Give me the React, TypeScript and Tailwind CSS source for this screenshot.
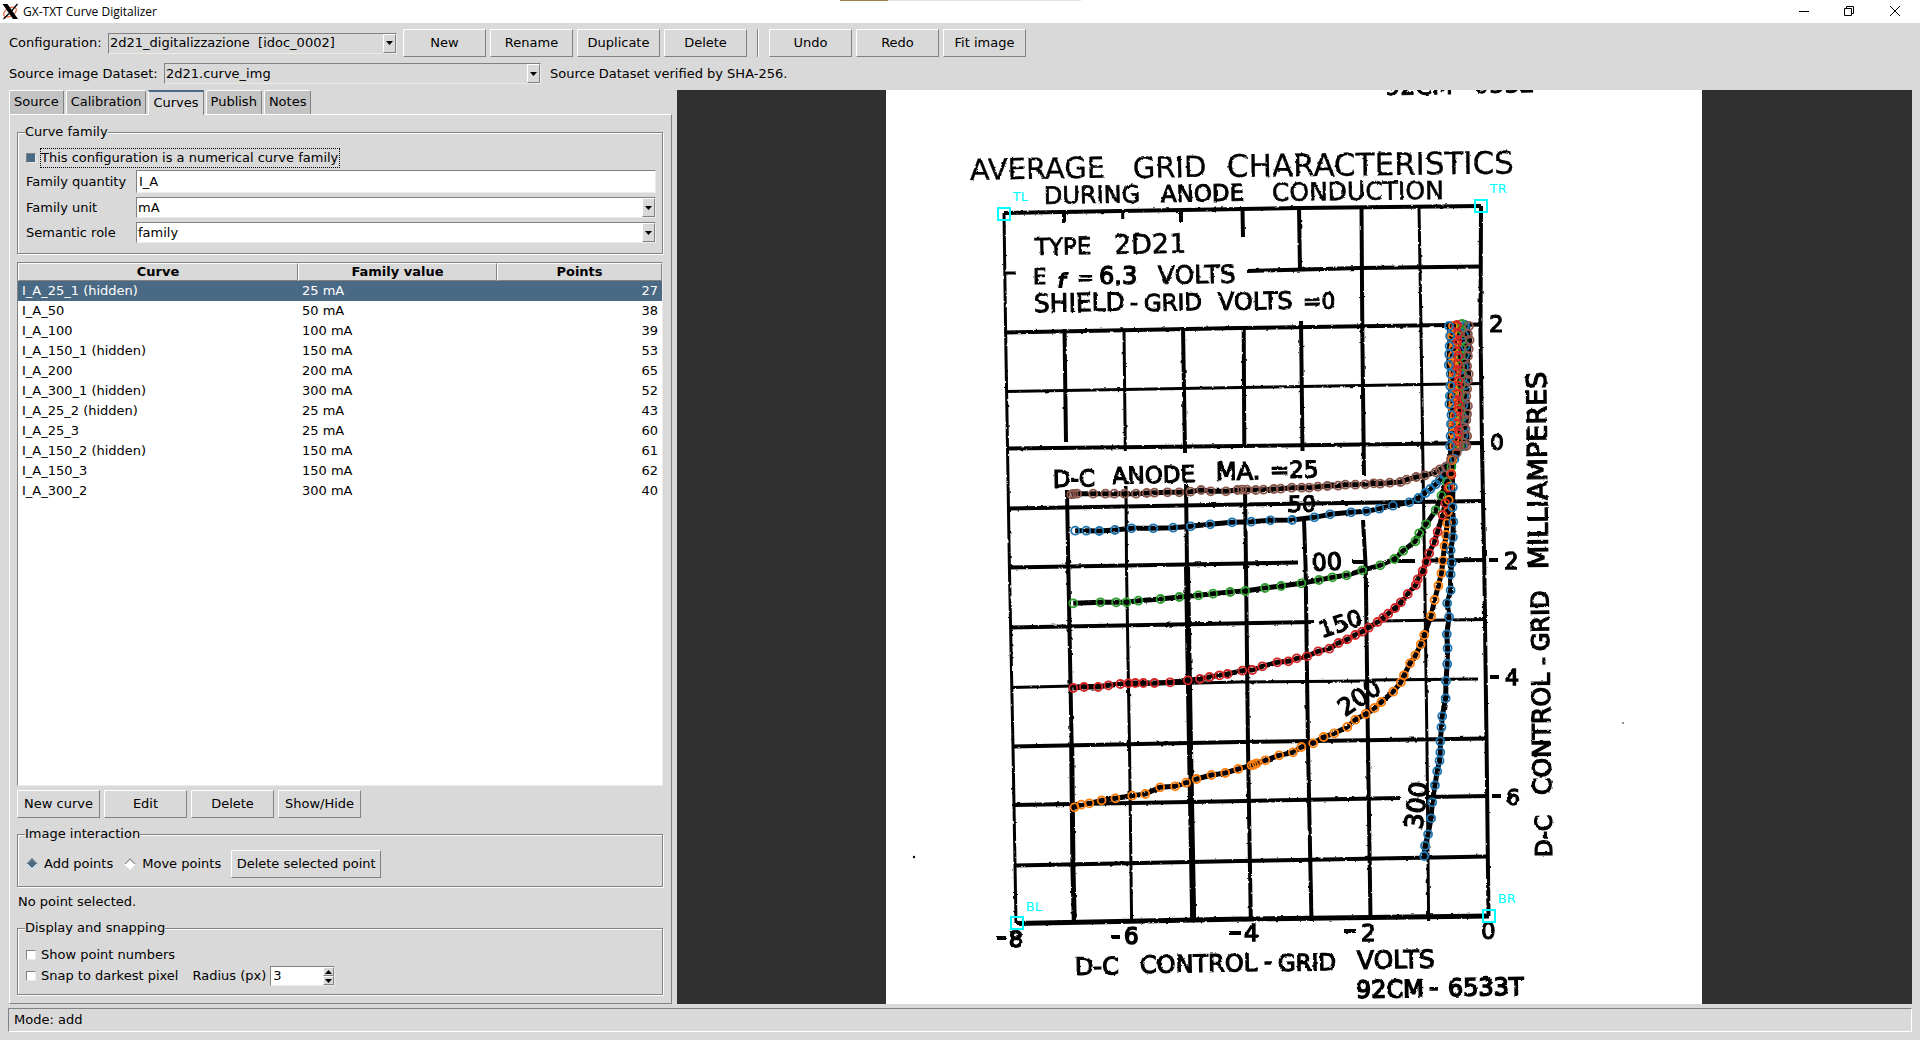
import React, { useState } from "react";

const CURVES = [
  ["I_A_25_1 (hidden)", "25 mA", 27],
  ["I_A_50", "50 mA", 38],
  ["I_A_100", "100 mA", 39],
  ["I_A_150_1 (hidden)", "150 mA", 53],
  ["I_A_200", "200 mA", 65],
  ["I_A_300_1 (hidden)", "300 mA", 52],
  ["I_A_25_2 (hidden)", "25 mA", 43],
  ["I_A_25_3", "25 mA", 60],
  ["I_A_150_2 (hidden)", "150 mA", 61],
  ["I_A_150_3", "150 mA", 62],
  ["I_A_300_2", "300 mA", 40],
] as const;

type Point = [number, number];

/* Digitized points, in scan units; toCanvas maps them onto the drawing. */
const toCanvas = (list: Point[]): Point[] => list.map(([x, y]) => [960 + x / 2.613, 340 + y / 3]);

const brownTail: Point[] = [
  [291, 463], [297, 462], [306, 461], [348, 461], [380, 461], [403, 461], [430, 461], [460, 461], [488, 459], [508, 458],
  [542, 457], [573, 457], [602, 455], [630, 450], [655, 454], [695, 454], [725, 450], [737, 449], [750, 449], [773, 450],
  [793, 449], [820, 447], [838, 446], [867, 443], [893, 443], [912, 443], [935, 440], [960, 438], [988, 437], [1007, 434],
  [1033, 434], [1059, 433], [1081, 430], [1098, 431], [1123, 428], [1151, 426], [1167, 419], [1192, 411], [1215, 406],
  [1243, 397], [1254, 388], [1270, 380], [1283, 358], [1298, 338], [1317, 317],
];
const blue50Tail: Point[] = [
  [301, 572], [330, 572], [364, 573], [405, 570], [448, 565], [505, 565], [557, 563], [603, 559], [654, 553], [711, 547],
  [761, 545], [811, 541], [868, 540], [926, 532], [967, 523], [1022, 517], [1062, 514], [1096, 506], [1131, 497],
  [1174, 487], [1198, 474], [1216, 459], [1229, 447], [1243, 433], [1254, 420], [1265, 405], [1270, 380], [1292, 357],
];
const greenTail: Point[] = [
  [296, 790], [367, 787], [408, 787], [435, 787], [466, 782], [524, 777], [573, 771], [623, 766], [661, 761], [706, 756],
  [745, 753], [797, 744], [839, 738], [892, 730], [938, 720], [973, 712], [1010, 706], [1051, 691], [1098, 676],
  [1135, 657], [1158, 632], [1190, 604], [1200, 580], [1218, 553], [1243, 511], [1258, 467], [1272, 425], [1284, 380],
];
const redTail: Point[] = [
  [296, 1044], [324, 1041], [361, 1041], [388, 1036], [419, 1032], [440, 1030], [458, 1029], [479, 1029], [508, 1029],
  [549, 1027], [595, 1021], [627, 1017], [652, 1011], [678, 1006], [699, 1002], [738, 992], [764, 990], [790, 979],
  [829, 967], [858, 964], [880, 955], [907, 949], [936, 934], [965, 926], [989, 909], [1012, 898], [1033, 885],
  [1051, 875], [1068, 863], [1091, 846], [1106, 833], [1119, 821], [1137, 804], [1152, 787], [1170, 762], [1191, 735],
  [1196, 718], [1209, 693], [1219, 666], [1226, 640], [1239, 606], [1248, 575], [1261, 525], [1268, 490], [1276, 443],
  [1284, 404],
];
const orangeTail: Point[] = [
  [299, 1402], [317, 1394], [338, 1390], [370, 1381], [406, 1375], [450, 1367], [484, 1362], [523, 1342], [562, 1339],
  [591, 1328], [618, 1317], [657, 1305], [693, 1299], [727, 1287], [762, 1276], [768, 1274], [775, 1270], [798, 1261],
  [834, 1246], [870, 1237], [892, 1221], [923, 1210], [950, 1191], [978, 1180], [1012, 1161], [1033, 1139], [1060, 1122],
  [1083, 1104], [1101, 1086], [1132, 1055], [1152, 1027], [1160, 1006], [1176, 970], [1190, 946], [1204, 913],
  [1213, 885], [1231, 828], [1240, 780], [1250, 737], [1258, 700], [1262, 662], [1266, 618], [1270, 585], [1273, 550],
  [1275, 515], [1277, 480], [1280, 440], [1283, 400], [1286, 360],
];
const blue300Tail: Point[] = [
  [1213, 1548], [1215, 1517], [1223, 1483], [1231, 1435], [1234, 1387], [1241, 1336], [1247, 1294], [1253, 1262],
  [1255, 1237], [1255, 1204], [1258, 1162], [1260, 1129], [1269, 1075], [1270, 1023], [1273, 972], [1274, 925],
  [1272, 883], [1278, 831], [1273, 790], [1282, 751], [1282, 703], [1285, 668], [1282, 631], [1288, 592], [1289, 545],
  [1287, 502], [1288, 442],
];

/* The steep upper part of a curve: evenly stepped points with a little hand jitter. */
function riser(bottomX: number, topX: number, topY: number, step: number, phase: number): Point[] {
  const out: Point[] = [];
  const bottomY = 446;
  let i = 0;
  for (let y = bottomY; y > topY; y -= step + ((i * 7 + phase) % 5) - 2) {
    const t = (bottomY - y) / (bottomY - topY);
    const wobble = (((i * 5 + phase) % 4) - 1.5) * 0.6;
    out.push([bottomX + (topX - bottomX) * t + wobble, y]);
    i += 1;
  }
  out.push([topX, topY]);
  return out;
}

const SERIES: { color: string; points: Point[] }[] = [
  { color: "#1f77b4", points: [...toCanvas(blue50Tail), ...riser(1463, 1465, 325, 10, 1)] },
  { color: "#2ca02c", points: [...toCanvas(greenTail), ...riser(1459, 1462, 324, 9, 3)] },
  { color: "#ff7f0e", points: [...toCanvas(orangeTail), ...riser(1454, 1453, 326, 6, 2)] },
  { color: "#d62728", points: [...toCanvas(redTail), ...riser(1458, 1457, 325, 6, 4)] },
  { color: "#1f77b4", points: [...toCanvas(blue300Tail), ...riser(1451, 1449, 326, 10, 0)] },
  { color: "#8c564b", points: [...toCanvas(brownTail), ...riser(1466, 1469, 326, 8, 2)] },
];

/* Grid of the scanned sheet, slightly skewed as on paper: [path, stroke width]. */
const GRID: [string, number][] = [
  ["M1004 213 L1120 211 L1300 208 L1481 206", 4],
  ["M1005 273 h11", 3],
  ["M1247 271 L1360 268 L1481 266.5", 4],
  ["M1005 332.5 L1240 328 L1481 324.5", 4],
  ["M1006 391.5 L1240 387.5 L1482 383.5", 3],
  ["M1007 448.5 L1240 446 L1482 443", 4],
  ["M1008 508.5 L1240 504.5 L1483 501", 4],
  ["M1009 567.5 L1298 562.5", 4],
  ["M1352 562 H1367 M1392 561 H1415 M1430 560.5 L1484 560", 4],
  ["M1010 627.5 L1314 622", 4],
  ["M1377 621 L1485 619.5", 3],
  ["M1011 687.5 L1240 682 L1366 681 M1372 680 L1478 679", 3],
  ["M1013 746.5 L1240 742 L1487 738.5", 4],
  ["M1014 805 L1190 802 L1400 798", 4],
  ["M1427 797 L1488 796", 4],
  ["M1015 865.5 L1240 861 L1488 856.5", 4],
  ["M1016 923.5 L1250 919 L1489 916", 5],
  ["M1004 213 L1005.6 330 L1007.5 447 L1009.4 567 L1013 747 L1016 923", 3],
  ["M1064 212 V223 M1064.5 329 L1066 442 M1067 490 L1068.3 567 L1071.7 747", 4],
  ["M1071.7 747 L1073 870 L1074.3 922", 5],
  ["M1122.7 212 V219 M1124 329 L1125.3 451 M1126 486 L1126.5 567 L1129.5 747 L1131.6 921", 3],
  ["M1181 209 V222 M1183 327 L1185 453 M1186 484 L1187 567", 4],
  ["M1187 567 L1190 747 L1193 908 V921", 6],
  ["M1242.5 209 L1243 237 M1243.7 327 L1244.3 447 M1245 488 L1246 567 L1248 747 L1250.8 919", 4],
  ["M1299 207 L1300 271 M1301 321 L1302.5 451 M1304 520 L1305.6 567 L1308 747 L1311.5 922", 4],
  ["M1361.5 207 L1362.3 330 L1364 476 M1363 520 L1365.7 567 L1368 747 L1370.5 919", 4],
  ["M1419 207 L1421 330 L1422.7 447 L1424.6 567 L1427 747 L1428.6 921", 3],
  ["M1481 206 L1480.5 330 L1482 447 L1484.3 567 L1486.6 747 L1488.5 916", 4],
  ["M1489 560 h9 M1490 677 h9 M1492 796 h9", 4],
  ["M996 938 h10 M1111 937 h9 M1229 933 h12 M1344 931 h12", 4],
];

/* Lettering: text, x, baseline, font size, rotation, stroke weight. */
const LETTERING: [string, number, number, number, number, number][] = [
  ["92CM", 1385, 95, 24, -1, 1],
  ["6532", 1474, 93, 24, -1, 1],
  ["AVERAGE", 970, 180, 29, -1, 0.3],
  ["GRID", 1133, 178, 29, -1, 0.3],
  ["CHARACTERISTICS", 1227, 177, 31, -0.7, 0.3],
  ["DURING", 1044, 204, 24, -1, 0.7],
  ["ANODE", 1161, 202, 23, -1, 1],
  ["CONDUCTION", 1272, 201, 25, -0.7, 0.6],
  ["TYPE", 1035, 255, 23, -1, 0.8],
  ["2D21", 1114, 254, 27, -1, 0.6],
  ["E", 1033, 284, 21, 0, 1],
  ["=", 1077, 284, 20, 0, 1],
  ["6.3", 1099, 284, 24, 0, 1.4],
  ["VOLTS", 1158, 284, 25, -1, 0.8],
  ["SHIELD", 1034, 312, 25, -1, 1],
  ["-", 1130, 310, 22, 0, 1.2],
  ["GRID", 1144, 311, 23, -1, 1],
  ["VOLTS", 1218, 310, 24, -1, 1],
  ["=0", 1303, 309, 22, -1, 1],
  ["D-C", 1053, 487, 23, -1, 1.3],
  ["ANODE", 1112, 484, 23, -1.5, 1.2],
  ["MA.", 1216, 480, 24, -1, 1.3],
  ["=25", 1270, 478, 23, -1, 1.3],
  ["50", 1288, 512, 22, -1, 1.3],
  ["00", 1312, 571, 24, -3, 1.3],
  ["150", 1322, 638, 23, -18, 1.3],
  ["200", 1345, 717, 24, -34, 1.3],
  ["300", 1422, 830, 25, -83, 1.4],
  ["2", 1489, 332, 23, 0, 1.2],
  ["0", 1490, 450, 22, 0, 1.2],
  ["2", 1504, 569, 23, 0, 1.4],
  ["4", 1505, 685, 22, 0, 1.4],
  ["6", 1506, 805, 22, 0, 1.4],
  ["8", 1009, 947, 22, 0, 1.8],
  ["6", 1124, 944, 23, 0, 1.6],
  ["4", 1244, 941, 23, 0, 1.4],
  ["2", 1361, 941, 23, 0, 1.4],
  ["0", 1481, 939, 23, 0, 1.2],
  ["D-C", 1075, 975, 24, -1, 1.2],
  ["CONTROL", 1140, 973, 24, -1, 1.2],
  ["-", 1264, 970, 24, 0, 1.4],
  ["GRID", 1278, 971, 23, -1, 1.2],
  ["VOLTS", 1357, 969, 25, -1, 1.2],
  ["92CM", 1356, 998, 24, -1, 1.5],
  ["-", 1429, 996, 26, 0, 1.6],
  ["6533T", 1448, 996, 24, -1, 1.5],
  ["D-C", 1552, 857, 23, -90.6, 1.3],
  ["CONTROL", 1551, 795, 25, -90.6, 1.3],
  ["-", 1550, 665, 22, -90.6, 1.3],
  ["GRID", 1549, 651, 24, -90.6, 1.3],
  ["MILLIAMPERES", 1548, 569, 27, -90.6, 1.2],
];

const CORNERS: [string, number, number, number, number][] = [
  ["TL", 1004, 214, 1013, 201],
  ["TR", 1481, 206, 1490, 193],
  ["BL", 1017, 923, 1026, 911],
  ["BR", 1489, 916, 1498, 903],
];

function CurveCanvas() {
  return (
    <svg
      role="img"
      aria-label="Scanned grid characteristics with digitized curves"
      viewBox="677 90 1235 914"
      preserveAspectRatio="xMidYMid slice"
      className="block h-full w-full bg-[#303030]"
    >
      <defs>
        <filter id="ink" x="-5%" y="-5%" width="110%" height="110%">
          <feTurbulence type="fractalNoise" baseFrequency="0.2" numOctaves="2" seed="4" result="n" />
          <feDisplacementMap in="SourceGraphic" in2="n" scale="2.4" xChannelSelector="R" yChannelSelector="G" />
        </filter>
      </defs>
      <rect x="886" y="80" width="816" height="940" fill="#fff" />
      <g filter="url(#ink)">
        <g fill="none" stroke="#000">
          {GRID.map(([d, w]) => (
            <path key={d} d={d} strokeWidth={w} />
          ))}
          {SERIES.map((s, i) => (
            <polyline key={i} points={s.points.map((p) => p.join(",")).join(" ")} strokeWidth="5" strokeLinejoin="round" />
          ))}
        </g>
        <g fontFamily="'DejaVu Sans', sans-serif" fill="#000" stroke="#000">
          {LETTERING.map(([t, x, y, size, turn, w], i) => (
            <text key={i} x={x} y={y} fontSize={size} strokeWidth={w} transform={`rotate(${turn} ${x} ${y})`}>
              {t}
            </text>
          ))}
          <text x="1057" y="288" fontSize="22" fontStyle="italic" fontWeight="bold" strokeWidth="0">
            f
          </text>
        </g>
        <circle cx="914" cy="857" r="1.2" />
        <circle cx="1623" cy="723" r="0.8" />
      </g>
      {SERIES.map((s, i) => (
        <g key={i} fill="none" stroke={s.color} strokeWidth="1.8">
          {s.points.map(([x, y], j) => (
            <circle key={j} cx={x} cy={y} r="4" />
          ))}
        </g>
      ))}
      <g fontFamily="'DejaVu Sans', sans-serif" fontSize="13">
        {CORNERS.map(([name, cx, cy, tx, ty]) => (
          <g key={name}>
            <rect x={cx - 6} y={cy - 6} width="12" height="12" fill="none" stroke="#0ff" strokeWidth="2" />
            <text x={tx} y={ty} fill="#0ff">
              {name}
            </text>
          </g>
        ))}
      </g>
    </svg>
  );
}

const RAISED = "border border-t-white border-l-white border-b-[#828282] border-r-[#828282]";
const SUNKEN = "border border-t-[#828282] border-l-[#828282] border-b-[#eeebe7] border-r-[#eeebe7]";

function Button({ children, className = "w-[83px]" }: { children: React.ReactNode; className?: string }) {
  return (
    <button className={`${RAISED} ${className} h-7 shrink-0 pb-px text-center whitespace-nowrap`}>{children}</button>
  );
}

function Triangle({ up = false }: { up?: boolean }) {
  return (
    <svg width="7" height="4" viewBox="0 0 7 4" className={up ? "rotate-180" : ""}>
      <path d="M0 0h7L3.5 4z" fill="#000" />
    </svg>
  );
}

function Combo({ id, value, className = "" }: { id: string; value: string; className?: string }) {
  return (
    <div className={`${SUNKEN} ${className} relative h-[21px]`}>
      <select id={id} className="block h-full w-full appearance-none bg-transparent pl-px leading-4 whitespace-pre outline-none">
        <option>{value}</option>
      </select>
      <span className={`${RAISED} pointer-events-none absolute inset-y-0 right-0 flex w-[13px] items-center justify-center bg-[#d9d9d9]`}>
        <Triangle />
      </span>
    </div>
  );
}

function Group({ title, className, children }: { title: string; className: string; children: React.ReactNode }) {
  return (
    <fieldset className={`${className} min-w-0 border border-[#828282] pr-[6px] pl-2 shadow-[1px_1px_0_#fff,inset_1px_1px_0_#fff]`}>
      <legend className="-ml-px bg-[#d9d9d9] leading-4">{title}</legend>
      {children}
    </fieldset>
  );
}

const TICK =
  "h-[10px] w-[10px] shrink-0 appearance-none border border-t-[#828282] border-l-[#828282] border-b-[#eeebe7] border-r-[#eeebe7] bg-white checked:bg-[#4a6984]";

function Radio({ label, checked, onPick }: { label: string; checked: boolean; onPick: () => void }) {
  return (
    <label className="flex items-center gap-2">
      <input
        type="radio"
        name="mode"
        checked={checked}
        onChange={onPick}
        className="ml-[2px] h-2 w-2 rotate-45 appearance-none border border-t-[#828282] border-r-white border-b-white border-l-[#828282] bg-white checked:bg-[#4a6984]"
      />
      {label}
    </label>
  );
}

const TABS = ["Source", "Calibration", "Curves", "Publish", "Notes"];

export default function App() {
  const [mode, setMode] = useState("add");
  return (
    <div className="flex h-screen flex-col bg-[#d9d9d9] font-['DejaVu_Sans',sans-serif] text-[13px] leading-4 text-black">
      <header className="relative flex h-[23px] shrink-0 items-center bg-white pr-[2px] pl-[2px] font-['Open_Sans',sans-serif] text-[12px]">
        <svg width="17" height="17" viewBox="0 0 17 17" aria-hidden="true">
          <ellipse cx="8" cy="9" rx="7" ry="4" transform="rotate(-30 8 9)" fill="none" stroke="#e8663a" strokeWidth="1.2" />
          <path d="M0.5 1h5L16 16h-5z" fill="#000" />
          <path d="M15.500 1L9.500 8M7 10.500L1.500 16" stroke="#000" strokeWidth="1.300" />
        </svg>
        <h1 className="ml-1 flex-1">GX-TXT Curve Digitalizer</h1>
        <div className="absolute top-0 left-[840px] flex h-px w-[241px] bg-[#e5e5e5]">
          <span className="w-12 bg-[#9c7f4a]" />
        </div>
        <div className="flex h-full pb-[2px]">
          <button aria-label="Minimize" className="flex w-[45px] items-center justify-center">
            <svg width="10" height="10"><path d="M0 5.500h10" stroke="#000" /></svg>
          </button>
          <button aria-label="Restore" className="flex w-[45px] items-center justify-center">
            <svg width="10" height="10" fill="none" stroke="#000">
              <path d="M0.500 2.500h7v7h-7zM2.500 2.500v-2h7v7h-2" />
            </svg>
          </button>
          <button aria-label="Close" className="flex w-[47px] items-center justify-center">
            <svg width="10" height="10"><path d="M0 0l10 10M10 0L0 10" stroke="#000" /></svg>
          </button>
        </div>
      </header>

      <div className="mt-[6px] flex items-center gap-1 pl-[9px]">
        <label htmlFor="config" className="w-[95px]">Configuration:</label>
        <Combo id="config" value={"2d21_digitalizzazione\u00a0\u00a0[idoc_0002]"} className="mr-[2px] w-[289px]" />
        <Button>New</Button>
        <Button>Rename</Button>
        <Button>Duplicate</Button>
        <Button>Delete</Button>
        <div className="mx-[6px] h-7 w-[2px] border-l border-l-[#828282] bg-white" />
        <Button>Undo</Button>
        <Button>Redo</Button>
        <Button>Fit image</Button>
      </div>

      <div className="mt-[6px] flex items-center gap-1 pl-[9px]">
        <label htmlFor="dataset" className="w-[151px]">Source image Dataset:</label>
        <Combo id="dataset" value="2d21.curve_img" className="mr-[5px] w-[377px]" />
        <span>Source Dataset verified by SHA-256.</span>
      </div>

      <main className="mt-[6px] flex min-h-0 flex-1 gap-[5px] pr-2 pl-[9px]">
        <section className="flex min-w-0 flex-[663] flex-col">
          <div role="tablist" className="relative flex h-6 shrink-0 items-stretch gap-[2px]">
            {TABS.map((t) => (
              <button
                key={t}
                role="tab"
                aria-selected={t === "Curves"}
                className={
                  t === "Curves"
                    ? "relative -mb-px border-t-2 border-r border-l border-t-[#4a6984] border-r-[#828282] border-l-white bg-[#d9d9d9] px-1 pb-[2px]"
                    : "rounded-t-[2px] border-t border-r border-l border-t-white border-r-[#828282] border-l-white bg-[#c3c3c3] px-1 pb-px"
                }
              >
                {t}
              </button>
            ))}
          </div>

          <div className={`${RAISED} flex min-h-0 flex-1 flex-col pt-[9px] pr-2 pb-2 pl-[7px]`}>
            <Group title="Curve family" className="h-[130px] shrink-0">
              <label className="mt-2 flex items-center gap-1">
                <input type="checkbox" defaultChecked className={TICK} />
                <span className="h-5 border border-dotted border-black pr-px leading-[18px]">
                  This configuration is a numerical curve family
                </span>
              </label>
              <div className="mt-[2px] grid grid-cols-[110px_1fr] items-center gap-y-1">
                <label htmlFor="quantity">Family quantity</label>
                <input id="quantity" defaultValue="I_A" className={`${SUNKEN} h-[23px] w-full bg-white pl-[2px] outline-none`} />
                <label htmlFor="unit">Family unit</label>
                <Combo id="unit" value="mA" className="bg-white" />
                <label htmlFor="role">Semantic role</label>
                <Combo id="role" value="family" className="bg-white" />
              </div>
            </Group>

            <div className={`${SUNKEN} mt-[8px] min-h-0 flex-1 bg-white`}>
              <table className="w-full table-fixed border-separate border-spacing-0">
                <colgroup>
                  <col className="w-[280px]" />
                  <col className="w-[199px]" />
                  <col />
                </colgroup>
                <thead>
                  <tr className="h-[18px] bg-[#d9d9d9]">
                    <th className={`${RAISED} p-0`}>Curve</th>
                    <th className={`${RAISED} p-0`}>Family value</th>
                    <th className={`${RAISED} p-0`}>Points</th>
                  </tr>
                </thead>
                <tbody>
                  {CURVES.map(([name, value, count], i) => (
                    <tr key={name} className={i === 0 ? "h-5 bg-[#4a6984] text-white" : "h-5"}>
                      <td className="p-0 pl-1">{name}</td>
                      <td className="p-0 pl-1">{value}</td>
                      <td className="p-0 pr-1 text-right">{count}</td>
                    </tr>
                  ))}
                </tbody>
              </table>
            </div>

            <div className="mt-1 flex gap-1">
              <Button>New curve</Button>
              <Button>Edit</Button>
              <Button>Delete</Button>
              <Button>Show/Hide</Button>
            </div>

            <Group title="Image interaction" className="mt-2 h-[61px] shrink-0">
              <div className="mt-[8px] flex items-center">
                <Radio label="Add points" checked={mode === "add"} onPick={() => setMode("add")} />
                <div className="ml-[11px]">
                  <Radio label="Move points" checked={mode === "move"} onPick={() => setMode("move")} />
                </div>
                <Button className="ml-[10px] w-[150px]">Delete selected point</Button>
              </div>
            </Group>

            <p className="mt-[7px] pl-px">No point selected.</p>

            <Group title="Display and snapping" className="mt-[10px] h-[75px] shrink-0">
              <label className="mt-[11px] flex items-center gap-[5px]">
                <input type="checkbox" className={TICK} />
                Show point numbers
              </label>
              <div className="mt-[3px] flex items-center">
                <label className="flex items-center gap-[5px]">
                  <input type="checkbox" className={TICK} />
                  Snap to darkest pixel
                </label>
                <label htmlFor="radius" className="ml-[14px]">Radius (px)</label>
                <div className={`${SUNKEN} ml-1 flex h-5 w-[65px] bg-white`}>
                  <input id="radius" defaultValue="3" className="min-w-0 flex-1 pl-[2px] outline-none" />
                  <div className="flex w-[11px] flex-col">
                    <button aria-label="Increase" className={`${RAISED} flex flex-1 items-center justify-center bg-[#d9d9d9]`}>
                      <Triangle up />
                    </button>
                    <button aria-label="Decrease" className={`${RAISED} flex flex-1 items-center justify-center bg-[#d9d9d9]`}>
                      <Triangle />
                    </button>
                  </div>
                </div>
              </div>
            </Group>
          </div>
        </section>

        <section className="min-w-0 flex-[1235]">
          <CurveCanvas />
        </section>
      </main>

      <footer className="mx-2 mt-[4px] mb-2 h-6 shrink-0 border border-t-[#828282] border-r-white border-b-white border-l-[#828282] pl-[5px] leading-[22px]">
        Mode: {mode}
      </footer>
    </div>
  );
}
